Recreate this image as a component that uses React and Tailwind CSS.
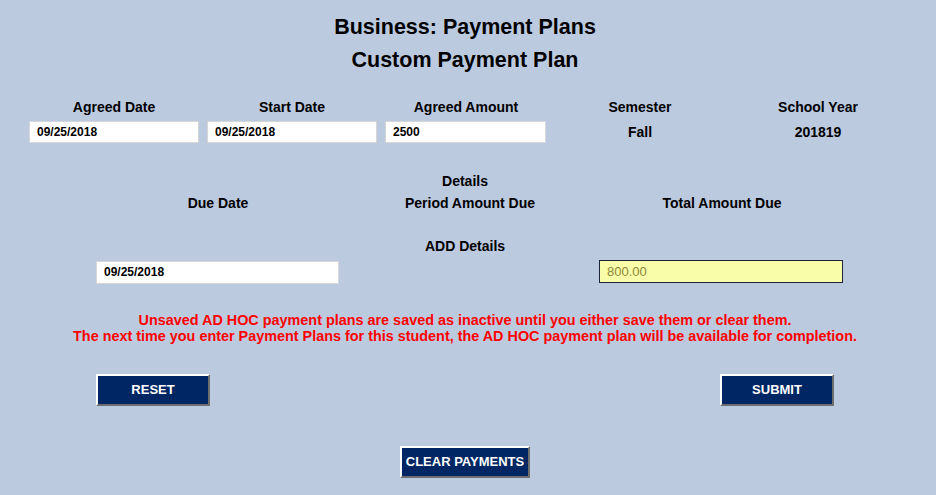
import React, { useState } from 'react';

const font = { fontFamily: '"Liberation Sans", Arial, sans-serif' };

function TextBox({ value, onChange, className = '' }) {
    return (
        <input
            type="text"
            value={value}
            onChange={(e) => onChange(e.target.value)}
            className={`h-[22px] border border-[#d6d6d6] bg-white px-[7px] text-[12px] font-bold text-black outline-none ${className}`}
        />
    );
}

function NavyButton({ children, onClick, className = '' }) {
    return (
        <button
            onClick={onClick}
            className={`h-[32px] bg-[#002663] border-t-2 border-l-2 border-t-white border-l-white border-r-2 border-b-2 border-r-[#6e6e6e] border-b-[#6e6e6e] text-[13px] font-bold text-white ${className}`}
        >
            {children}
        </button>
    );
}

export default function App() {
    const [agreedDate, setAgreedDate] = useState('09/25/2018');
    const [startDate, setStartDate] = useState('09/25/2018');
    const [agreedAmount, setAgreedAmount] = useState('2500');
    const [dueDate, setDueDate] = useState('09/25/2018');

    const reset = () => {
        setAgreedDate('09/25/2018');
        setStartDate('09/25/2018');
        setAgreedAmount('2500');
        setDueDate('09/25/2018');
    };

    return (
        <div style={font} className="min-h-screen w-full bg-[#bccadf] text-black">
            <div className="w-[930px]">
                <div className="pt-[14px] text-center">
                    <h1 className="text-[21.5px] font-bold leading-[26px]">Business: Payment Plans</h1>
                    <h2 className="mt-[7px] text-[21.5px] font-bold leading-[26px]">Custom Payment Plan</h2>
                </div>

                {/* plan summary */}
                <div className="mt-[26px] ml-[25px] grid grid-cols-[178px_178px_170px_178px_178px] text-center text-[14px] font-bold">
                    <div className="leading-[16px]">Agreed Date</div>
                    <div className="leading-[16px]">Start Date</div>
                    <div className="leading-[16px]">Agreed Amount</div>
                    <div className="leading-[16px]">Semester</div>
                    <div className="leading-[16px]">School Year</div>

                    <div className="mt-[6px] flex justify-start pl-[4px]">
                        <TextBox value={agreedDate} onChange={setAgreedDate} className="w-[170px]" />
                    </div>
                    <div className="mt-[6px] flex justify-start pl-[4px]">
                        <TextBox value={startDate} onChange={setStartDate} className="w-[170px]" />
                    </div>
                    <div className="mt-[6px] flex justify-start pl-[4px]">
                        <TextBox value={agreedAmount} onChange={setAgreedAmount} className="w-[161px]" />
                    </div>
                    <div className="mt-[6px] leading-[22px]">Fall</div>
                    <div className="mt-[6px] leading-[22px]">201819</div>
                </div>

                {/* details */}
                <div className="mt-[30px] text-center text-[14px] font-bold leading-[16px]">Details</div>
                <div className="mt-[6px] ml-[92px] grid w-[756px] grid-cols-3 text-center text-[14px] font-bold leading-[16px]">
                    <div>Due Date</div>
                    <div>Period Amount Due</div>
                    <div>Total Amount Due</div>
                </div>

                <div className="mt-[27px] text-center text-[14px] font-bold leading-[16px]">ADD Details</div>
                <div className="mt-[5px] ml-[92px] grid w-[756px] grid-cols-3">
                    <div className="pl-[4px]">
                        <TextBox value={dueDate} onChange={setDueDate} className="h-[23px] w-[243px]" />
                    </div>
                    <div />
                    <div className="pl-[3px]">
                        <input
                            type="text"
                            readOnly
                            value="800.00"
                            className="h-[23px] w-[244px] border border-[#1c2438] bg-[#f9fca8] px-[7px] text-[13px] text-[#8a8a38] outline-none"
                        />
                    </div>
                </div>

                <div className="mt-[28px] text-center text-[14.4px] font-bold leading-[16px] text-[#ff0000]">
                    <p>Unsaved AD HOC payment plans are saved as inactive until you either save them or clear them.</p>
                    <p>The next time you enter Payment Plans for this student, the AD HOC payment plan will be available for completion.</p>
                </div>

                <div className="mt-[30px] ml-[96px] flex w-[738px] justify-between">
                    <NavyButton onClick={reset} className="w-[114px]">RESET</NavyButton>
                    <NavyButton className="w-[114px]">SUBMIT</NavyButton>
                </div>

                <div className="mt-[40px] flex justify-center">
                    <NavyButton className="w-[130px]">CLEAR PAYMENTS</NavyButton>
                </div>
            </div>
        </div>
    );
}
